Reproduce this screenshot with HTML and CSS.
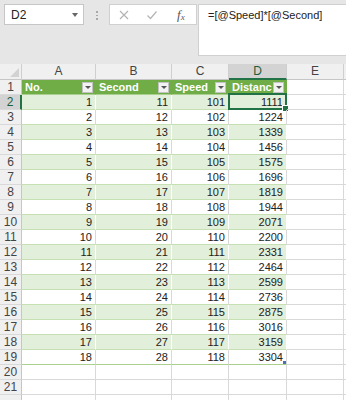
FILE: index.html
```html
<!DOCTYPE html>
<html lang="en">
<head>
    <meta charset="UTF-8">
    <meta name="viewport" content="width=device-width, initial-scale=1.0">
    <title>Distance table</title>
    <link rel="stylesheet" href="styles.css">
</head>
<body>
    <header class="topbar">
        <div class="namebox">
            <span class="namebox-text">D2</span>
            <span class="caret"></span>
        </div>
        <div class="grip">
            <span></span><span></span><span></span>
        </div>
        <div class="fnbox">
            <svg class="fn-icon" width="12" height="12" viewBox="0 0 12 12">
                <path d="M2 2 L10 10 M10 2 L2 10" stroke="#b4b4b4" stroke-width="1.2" fill="none"/>
            </svg>
            <svg class="fn-icon" width="12" height="12" viewBox="0 0 12 12">
                <path d="M1.5 6.5 L4.5 9.5 L10.5 2.5" stroke="#b4b4b4" stroke-width="1.2" fill="none"/>
            </svg>
            <span class="fx">f<sub>x</sub></span>
        </div>
        <div class="formula">=[@Speed]*[@Second]</div>
    </header>

    <main class="sheet">
        <div class="row col-heads">
            <div class="corner"><span class="corner-tri"></span></div>
            <div class="col-head">A</div>
            <div class="col-head">B</div>
            <div class="col-head">C</div>
            <div class="col-head active">D</div>
            <div class="col-head">E</div>
            <div class="col-head"></div>
        </div>

        <div class="row">
            <div class="row-head">1</div>
            <div class="cell th"><span class="th-text">No.</span><span class="filter"></span></div>
            <div class="cell th"><span class="th-text">Second</span><span class="filter"></span></div>
            <div class="cell th"><span class="th-text">Speed</span><span class="filter"></span></div>
            <div class="cell th"><span class="th-text">Distance</span><span class="filter"></span></div>
            <div class="cell"></div>
            <div class="cell"></div>
        </div>

        <div class="row band">
            <div class="row-head active">2</div>
            <div class="cell num">1</div><div class="cell num">11</div><div class="cell num">101</div>
            <div class="cell num selected">1111<span class="sel-box"><span class="sel-handle"></span></span></div>
            <div class="cell"></div><div class="cell"></div>
        </div>
        <div class="row plain">
            <div class="row-head">3</div>
            <div class="cell num">2</div><div class="cell num">12</div><div class="cell num">102</div><div class="cell num">1224</div>
            <div class="cell"></div><div class="cell"></div>
        </div>
        <div class="row band">
            <div class="row-head">4</div>
            <div class="cell num">3</div><div class="cell num">13</div><div class="cell num">103</div><div class="cell num">1339</div>
            <div class="cell"></div><div class="cell"></div>
        </div>
        <div class="row plain">
            <div class="row-head">5</div>
            <div class="cell num">4</div><div class="cell num">14</div><div class="cell num">104</div><div class="cell num">1456</div>
            <div class="cell"></div><div class="cell"></div>
        </div>
        <div class="row band">
            <div class="row-head">6</div>
            <div class="cell num">5</div><div class="cell num">15</div><div class="cell num">105</div><div class="cell num">1575</div>
            <div class="cell"></div><div class="cell"></div>
        </div>
        <div class="row plain">
            <div class="row-head">7</div>
            <div class="cell num">6</div><div class="cell num">16</div><div class="cell num">106</div><div class="cell num">1696</div>
            <div class="cell"></div><div class="cell"></div>
        </div>
        <div class="row band">
            <div class="row-head">8</div>
            <div class="cell num">7</div><div class="cell num">17</div><div class="cell num">107</div><div class="cell num">1819</div>
            <div class="cell"></div><div class="cell"></div>
        </div>
        <div class="row plain">
            <div class="row-head">9</div>
            <div class="cell num">8</div><div class="cell num">18</div><div class="cell num">108</div><div class="cell num">1944</div>
            <div class="cell"></div><div class="cell"></div>
        </div>
        <div class="row band">
            <div class="row-head">10</div>
            <div class="cell num">9</div><div class="cell num">19</div><div class="cell num">109</div><div class="cell num">2071</div>
            <div class="cell"></div><div class="cell"></div>
        </div>
        <div class="row plain">
            <div class="row-head">11</div>
            <div class="cell num">10</div><div class="cell num">20</div><div class="cell num">110</div><div class="cell num">2200</div>
            <div class="cell"></div><div class="cell"></div>
        </div>
        <div class="row band">
            <div class="row-head">12</div>
            <div class="cell num">11</div><div class="cell num">21</div><div class="cell num">111</div><div class="cell num">2331</div>
            <div class="cell"></div><div class="cell"></div>
        </div>
        <div class="row plain">
            <div class="row-head">13</div>
            <div class="cell num">12</div><div class="cell num">22</div><div class="cell num">112</div><div class="cell num">2464</div>
            <div class="cell"></div><div class="cell"></div>
        </div>
        <div class="row band">
            <div class="row-head">14</div>
            <div class="cell num">13</div><div class="cell num">23</div><div class="cell num">113</div><div class="cell num">2599</div>
            <div class="cell"></div><div class="cell"></div>
        </div>
        <div class="row plain">
            <div class="row-head">15</div>
            <div class="cell num">14</div><div class="cell num">24</div><div class="cell num">114</div><div class="cell num">2736</div>
            <div class="cell"></div><div class="cell"></div>
        </div>
        <div class="row band">
            <div class="row-head">16</div>
            <div class="cell num">15</div><div class="cell num">25</div><div class="cell num">115</div><div class="cell num">2875</div>
            <div class="cell"></div><div class="cell"></div>
        </div>
        <div class="row plain">
            <div class="row-head">17</div>
            <div class="cell num">16</div><div class="cell num">26</div><div class="cell num">116</div><div class="cell num">3016</div>
            <div class="cell"></div><div class="cell"></div>
        </div>
        <div class="row band">
            <div class="row-head">18</div>
            <div class="cell num">17</div><div class="cell num">27</div><div class="cell num">117</div><div class="cell num">3159</div>
            <div class="cell"></div><div class="cell"></div>
        </div>
        <div class="row plain last">
            <div class="row-head">19</div>
            <div class="cell num">18</div><div class="cell num">28</div><div class="cell num">118</div>
            <div class="cell num">3304<span class="resize-mark"></span></div>
            <div class="cell"></div><div class="cell"></div>
        </div>
        <div class="row">
            <div class="row-head">20</div>
            <div class="cell"></div><div class="cell"></div><div class="cell"></div><div class="cell"></div><div class="cell"></div><div class="cell"></div>
        </div>
        <div class="row">
            <div class="row-head">21</div>
            <div class="cell"></div><div class="cell"></div><div class="cell"></div><div class="cell"></div><div class="cell"></div><div class="cell"></div>
        </div>
        <div class="row">
            <div class="row-head"></div>
            <div class="cell"></div><div class="cell"></div><div class="cell"></div><div class="cell"></div><div class="cell"></div><div class="cell"></div>
        </div>
    </main>
</body>
</html>
```

FILE: styles.css
```css
body {
    margin: 0;
    width: 346px;
    height: 400px;
    overflow: hidden;
    font-family: 'Liberation Sans', Arial, sans-serif;
    font-size: 11px;
    color: #222;
    background-color: #fff;
}

/* formula bar */
.topbar {
    display: flex;
    align-items: flex-start;
    height: 64px;
    padding: 4px 0 0 4px;
    box-sizing: border-box;
    background-color: #e6e6e6;
}

.namebox {
    display: flex;
    align-items: center;
    justify-content: space-between;
    width: 80px;
    height: 21px;
    padding: 0 5px 0 6px;
    box-sizing: border-box;
    background-color: #fff;
    border: 1px solid #c6c6c6;
}

.namebox-text {
    font-size: 12px;
    color: #222;
}

.caret {
    width: 0;
    height: 0;
    border-left: 3.5px solid transparent;
    border-right: 3.5px solid transparent;
    border-top: 4px solid #666;
}

.grip {
    display: flex;
    flex-direction: column;
    gap: 2px;
    margin: 7px 11px 0 12px;
}

.grip span {
    width: 2px;
    height: 1.5px;
    background-color: #a8a8a8;
}

.fnbox {
    display: flex;
    align-items: center;
    gap: 16px;
    width: 88px;
    height: 21px;
    padding-left: 8px;
    box-sizing: border-box;
    background-color: #fff;
    border: 1px solid #d0d0d0;
}

.fx {
    font-family: 'Liberation Serif', serif;
    font-style: italic;
    font-size: 13px;
    color: #555;
    margin-left: 3px;
}

.fx sub {
    font-size: 9px;
    vertical-align: -1px;
}

.formula {
    flex: 1;
    height: 52px;
    margin-left: 1px;
    padding: 4px 0 0 9px;
    box-sizing: border-box;
    background-color: #fff;
    border: 1px solid #d0d0d0;
    border-right: none;
    font-size: 11px;
    color: #222;
}

/* sheet grid */
.sheet {
    width: 360px;
}

.row {
    display: grid;
    grid-template-columns: 22px 74px 76px 57px 58px 57px 16px;
    height: 15px;
}

.row > div {
    position: relative;
    box-sizing: border-box;
    border-right: 1px solid #d9d9d9;
    border-bottom: 1px solid #d9d9d9;
    line-height: 14px;
    white-space: nowrap;
}

.col-heads {
    height: 16px;
}

.col-heads > div {
    background-color: #f0f0f0;
    border-right-color: #cfcfcf;
    border-bottom-color: #c6c6c6;
}

.col-head {
    text-align: center;
    font-size: 12px;
    line-height: 15px;
    color: #444;
}

.col-head.active {
    background-color: #d3d3d3;
    border-bottom: 2px solid #217346;
    color: #1f5c38;
}

.corner-tri {
    position: absolute;
    right: 2px;
    bottom: 2px;
    width: 0;
    height: 0;
    border-left: 9px solid transparent;
    border-bottom: 9px solid #d2d2d2;
}

.row .row-head {
    background-color: #f0f0f0;
    border-right-color: #c6c6c6;
    text-align: center;
    font-size: 12px;
    color: #444;
}

.row .row-head.active {
    background-color: #d3d3d3;
    border-right: 2px solid #217346;
    color: #1f5c38;
}

.num {
    text-align: right;
    padding-right: 3px;
}

/* table styling */
.row > .th {
    display: flex;
    align-items: center;
    background-color: #70ad47;
    border-right-color: #70ad47;
    border-bottom-color: #a9d08e;
    padding-left: 3px;
    overflow: hidden;
}

.th-text {
    flex: 1;
    min-width: 0;
    overflow: hidden;
    color: #fff;
    font-weight: bold;
    font-size: 11px;
}

.filter {
    position: relative;
    flex: none;
    width: 11px;
    height: 11px;
    margin: 0 2px 0 1px;
    box-sizing: border-box;
    background-color: #f2f2f2;
    border: 1px solid #c2c2c2;
}

.filter::after {
    content: '';
    position: absolute;
    left: 2px;
    top: 3px;
    border-left: 3px solid transparent;
    border-right: 3px solid transparent;
    border-top: 3px solid #555;
}

.band > .cell:nth-child(-n+5) {
    background-color: #e2efda;
    border-right-color: #fff;
    border-bottom-color: #c6e0b4;
}

.plain > .cell:nth-child(-n+5) {
    border-bottom-color: #c6e0b4;
}

.row.last > .cell:nth-child(-n+5) {
    border-bottom-color: #a9d08e;
}

.sel-box {
    position: absolute;
    left: -1px;
    top: -2px;
    right: -1px;
    bottom: -1px;
    border: 2px solid #217346;
}

.sel-handle {
    position: absolute;
    right: -4px;
    bottom: -4px;
    width: 5px;
    height: 5px;
    background-color: #217346;
    border: 1px solid #fff;
}

.resize-mark {
    position: absolute;
    right: 0;
    bottom: 0;
    width: 3px;
    height: 3px;
    background-color: #4a6fb5;
}
```
